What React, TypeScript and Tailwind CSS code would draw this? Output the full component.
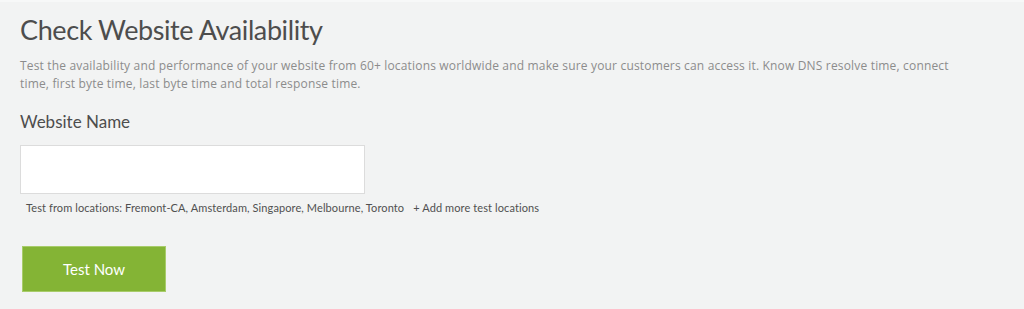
import React from "react";

export default function App() {
  return (
    <div className="w-[1024px] h-[309px] bg-[#f2f3f3] border-t-2 border-[#f7f8f8] overflow-hidden" style={{ fontFamily: "Lato, 'Open Sans', sans-serif" }}>
      <div className="pl-5 pt-[11px]">
        <h1 className="text-[27px] leading-[34px] text-[#4d4d4d] tracking-[-0.4px]" style={{ fontFamily: "Lato, sans-serif" }}>
          Check Website Availability
        </h1>
        <p className="mt-[10px] w-[960px] text-[12px] leading-[18px] text-[#8c8c8c] tracking-[0.17px]" style={{ fontFamily: "'Open Sans', sans-serif" }}>
          Test the availability and performance of your website from 60+ locations worldwide and make sure your customers can access it. Know DNS resolve time, connect time, first byte time, last byte time and total response time.
        </p>
        <div className="mt-[18px] text-[17px] leading-[22px] text-[#4d4d4d]">Website Name</div>
        <input
          type="text"
          className="mt-[12px] block w-[345px] h-[49px] bg-white border border-[#dcdcdc] outline-none"
        />
        <div className="mt-[7px] ml-[6px] flex text-[11px] leading-[14px] text-[#505050] tracking-[0.1px]">
          <span>Test from locations: Fremont-CA, Amsterdam, Singapore, Melbourne, Toronto</span>
          <span className="ml-[9px]">+ Add more test locations</span>
        </div>
        <button className="mt-[31px] ml-[2px] w-[144px] h-[46px] bg-[#84b435] text-white text-[15px] border border-[#a8cc6a]">
          Test Now
        </button>
      </div>
    </div>
  );
}
